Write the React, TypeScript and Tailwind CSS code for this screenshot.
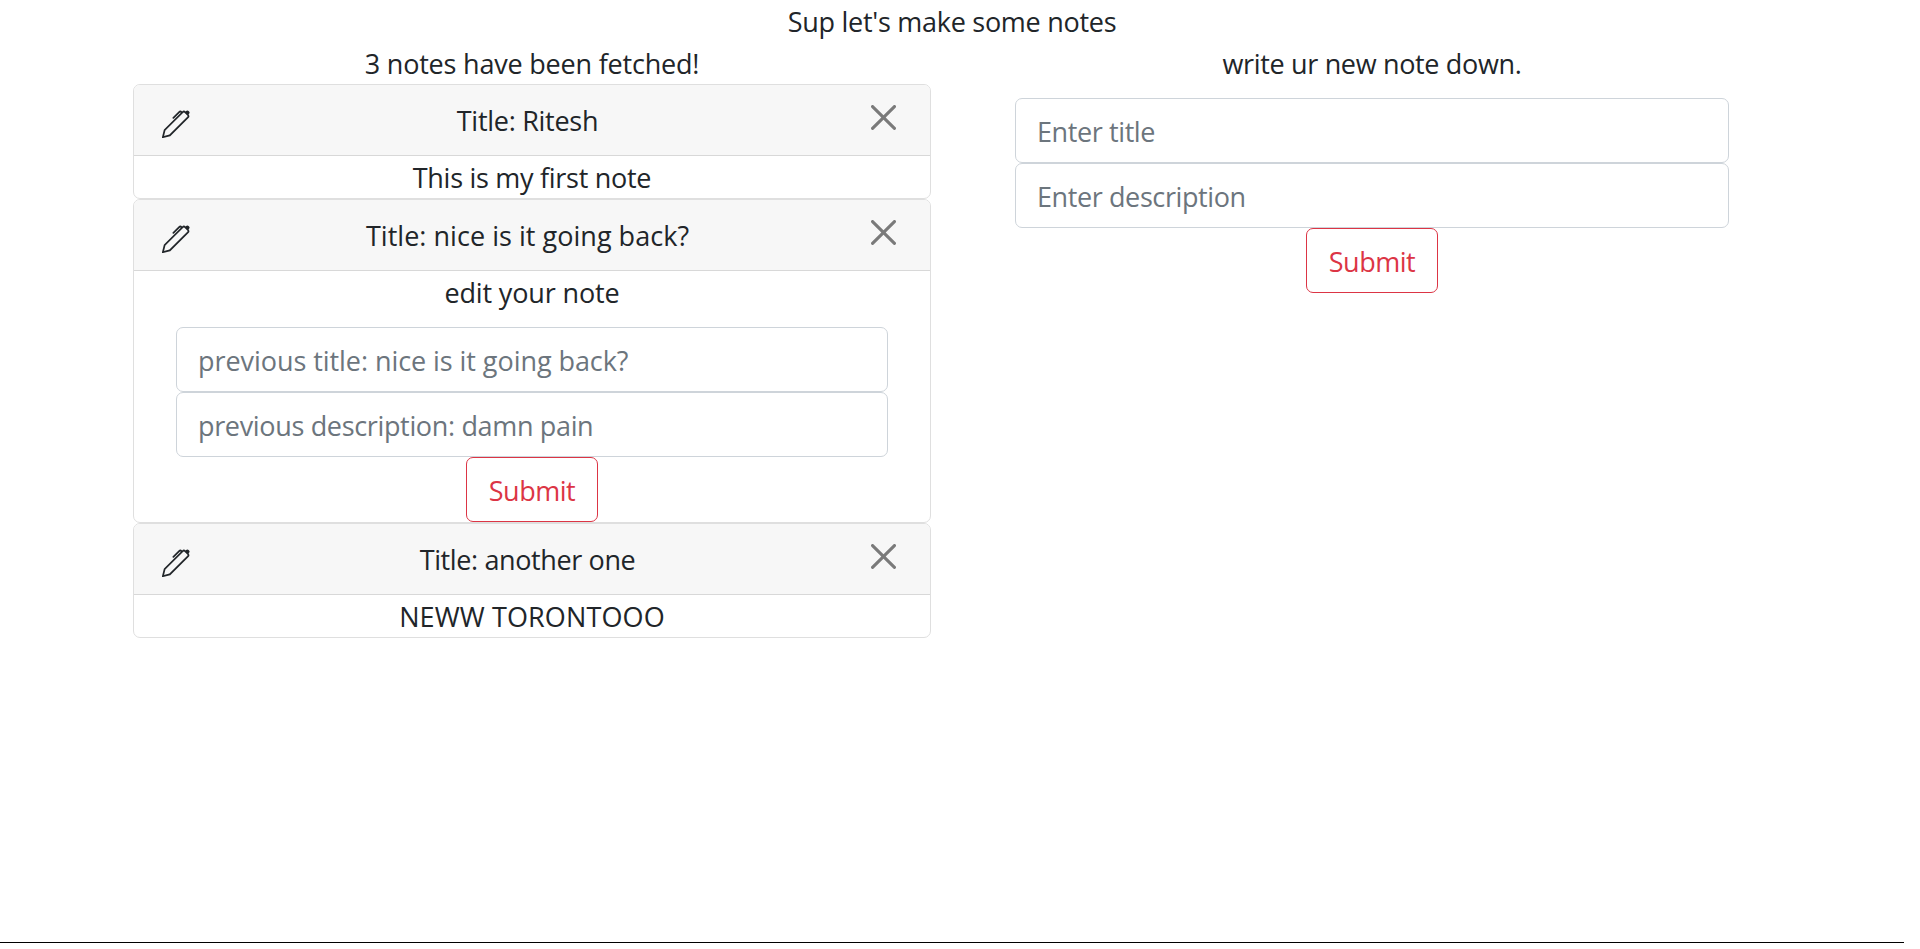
import React from 'react';

type Field = { placeholder: string; tracking: string };

const line = 'pt-px leading-[41px] whitespace-nowrap text-center';

function PenIcon() {
  return (
    <svg viewBox="0 0 16 16" fill="currentColor" className="mt-[10.5px] size-7 shrink-0">
      <path d="m13.498.795.149-.149a1.207 1.207 0 1 1 1.707 1.708l-.149.148a1.5 1.5 0 0 1-.059 2.059L4.854 14.854a.5.5 0 0 1-.233.131l-4 1a.5.5 0 0 1-.606-.606l1-4a.5.5 0 0 1 .131-.232l9.642-9.642a.5.5 0 0 0-.642.056L6.854 4.854a.5.5 0 1 1-.708-.708L9.44.854A1.5 1.5 0 0 1 11.5.796a1.5 1.5 0 0 1 1.998-.001zm-.644.766a.5.5 0 0 0-.707 0L1.95 11.756l-.764 3.057 3.057-.764L14.44 3.854a.5.5 0 0 0 0-.708z" />
    </svg>
  );
}

function CloseIcon() {
  return (
    <svg viewBox="0 0 16 16" className="size-[25px] fill-black opacity-50">
      <path d="M.293.293a1 1 0 0 1 1.414 0L8 6.586 14.293.293a1 1 0 1 1 1.414 1.414L9.414 8l6.293 6.293a1 1 0 0 1-1.414 1.414L8 9.414l-6.293 6.293a1 1 0 0 1-1.414-1.414L6.586 8 .293 1.707a1 1 0 0 1 0-1.414z" />
    </svg>
  );
}

function NoteForm({ fields, className }: { fields: Field[]; className: string }) {
  return (
    <form className={`flex flex-col items-center ${className}`} onSubmit={(e) => e.preventDefault()}>
      {fields.map((f) => (
        <input
          key={f.placeholder}
          placeholder={f.placeholder}
          className={`h-[65px] w-full rounded-[7px] border border-[#ced4da] bg-white px-[21px] pt-3 pb-2.5 leading-[41px] outline-none placeholder:text-[#6c757d] ${f.tracking}`}
        />
      ))}
      <button className="h-[65px] w-[132px] rounded-[7px] border border-[#dc3545] pt-3 pb-2.5 leading-[41px] tracking-[-0.46px] text-[#dc3545]">
        Submit
      </button>
    </form>
  );
}

function NoteCard({ title, tracking, children }: { title: string; tracking: string; children: React.ReactNode }) {
  return (
    <article className="overflow-hidden rounded-[7px] border border-[#dfdfdf]">
      <header className="flex h-[71px] items-start border-b border-[#d8d8d8] bg-[#f7f7f7] px-7 pt-3.5">
        <button aria-label="Edit note">
          <PenIcon />
        </button>
        <div className={`flex-1 ${line} ${tracking}`}>{title}</div>
        <button aria-label="Delete note" className="p-1.5">
          <CloseIcon />
        </button>
      </header>
      {children}
    </article>
  );
}

export default function App() {
  return (
    <div className="h-[949px] bg-white font-['Open_Sans','Noto_Sans',sans-serif] text-[27px] text-[#212529]">
      <main className="h-[943px] w-[1904px] border-b border-black">
        <div className={`${line} tracking-[-0.27px]`}>Sup let's make some notes</div>
        <div className="flex items-start gap-[84px] pl-[133px]">
          <section className="w-[798px]">
            <div className={`${line} tracking-[-0.2px]`}>3 notes have been fetched!</div>
            <NoteCard title="Title: Ritesh" tracking="tracking-[-0.28px]">
              <div className={`${line} tracking-[-0.28px]`}>This is my first note</div>
            </NoteCard>
            <NoteCard title="Title: nice is it going back?" tracking="tracking-[0.03px]">
              <div className={`${line} tracking-[-0.14px]`}>edit your note</div>
              <NoteForm
                className="mx-[42px] mt-3.5"
                fields={[
                  { placeholder: 'previous title: nice is it going back?', tracking: 'tracking-[-0.06px]' },
                  { placeholder: 'previous description: damn pain', tracking: 'tracking-[-0.34px]' },
                ]}
              />
            </NoteCard>
            <NoteCard title="Title: another one" tracking="tracking-[-0.38px]">
              <div className={`${line} tracking-[0.12px]`}>NEWW TORONTOOO</div>
            </NoteCard>
          </section>
          <section className="w-[714px]">
            <div className={`${line} tracking-[-0.34px]`}>write ur new note down.</div>
            <NoteForm
              className="mt-3.5"
              fields={[
                { placeholder: 'Enter title', tracking: 'tracking-[-0.4px]' },
                { placeholder: 'Enter description', tracking: 'tracking-[-0.4px]' },
              ]}
            />
          </section>
        </div>
      </main>
    </div>
  );
}
